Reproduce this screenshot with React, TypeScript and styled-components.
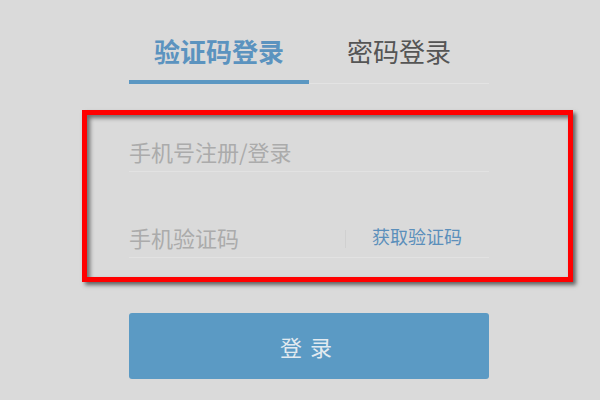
import React from "react";
import styled, { createGlobalStyle } from "styled-components";

const Global = createGlobalStyle`
  html, body { margin: 0; padding: 0; background: #dadada; }
  body { font-family: "Microsoft YaHei", "Noto Sans CJK SC", "Noto Sans", sans-serif; }
  * { box-sizing: border-box; }
`;

const Page = styled.div`
  width: 600px;
  height: 400px;
  overflow: hidden;
  background: #dadada;
`;

const Panel = styled.div`
  position: relative;
  margin-left: 129px;
  width: 360px;
`;

const Tabs = styled.div`
  display: flex;
  border-bottom: 1px solid #e3e3e3;
`;

const Tab = styled.div<{ $active?: boolean }>`
  flex: 1;
  height: 84px;
  padding-top: 20px;
  display: flex;
  align-items: center;
  justify-content: center;
  font-size: 26px;
  font-weight: ${(p) => (p.$active ? 700 : 400)};
  color: ${(p) => (p.$active ? "#5b93bf" : "#555555")};
  border-bottom: 4px solid ${(p) => (p.$active ? "#5b97c2" : "transparent")};
  margin-bottom: -1px;
`;

const Form = styled.div`
  display: flex;
  flex-direction: column;
  gap: 46px;
  padding-top: 48px;
`;

const Row = styled.div`
  display: flex;
  align-items: center;
  height: 40px;
  padding-bottom: 2px;
  border-bottom: 1px solid #e2e2e2;
`;

const Field = styled.input<{ $w?: number }>`
  border: none;
  outline: none;
  background: transparent;
  padding: 0;
  height: 100%;
  font-family: inherit;
  font-size: 22px;
  color: #333;
  width: ${(p) => (p.$w ? `${p.$w}px` : "100%")};
  &::placeholder { color: #ababab; }
`;

const Divider = styled.span`
  width: 1px;
  height: 18px;
  margin-top: 4px;
  background: #d0d0d0;
`;

const CodeLink = styled.span`
  margin-left: 26px;
  font-size: 18px;
  color: #5b8fbb;
  margin-top: -2px;
`;

const Submit = styled.button`
  display: block;
  margin-top: 55px;
  width: 360px;
  height: 66px;
  border: none;
  border-radius: 3px;
  background: #5b9ac4;
  color: #e2eaf0;
  font-family: inherit;
  font-size: 22px;
  letter-spacing: 8px;
  padding-left: 8px;
`;

const Highlight = styled.div`
  position: absolute;
  left: -47px;
  top: 110px;
  width: 491px;
  height: 172px;
  border: 5px solid #ff0000;
  box-shadow: 3px 3px 4px rgba(0, 0, 0, 0.55), inset 3px 3px 4px rgba(0, 0, 0, 0.5);
  pointer-events: none;
`;

export default function App() {
  return (
    <Page>
      <Global />
      <Panel>
        <Tabs>
          <Tab $active>验证码登录</Tab>
          <Tab>密码登录</Tab>
        </Tabs>
        <Form>
          <Row>
            <Field placeholder="手机号注册/登录" />
          </Row>
          <Row>
            <Field $w={216} placeholder="手机验证码" />
            <Divider />
            <CodeLink>获取验证码</CodeLink>
          </Row>
        </Form>
        <Submit>登录</Submit>
        <Highlight />
      </Panel>
    </Page>
  );
}
